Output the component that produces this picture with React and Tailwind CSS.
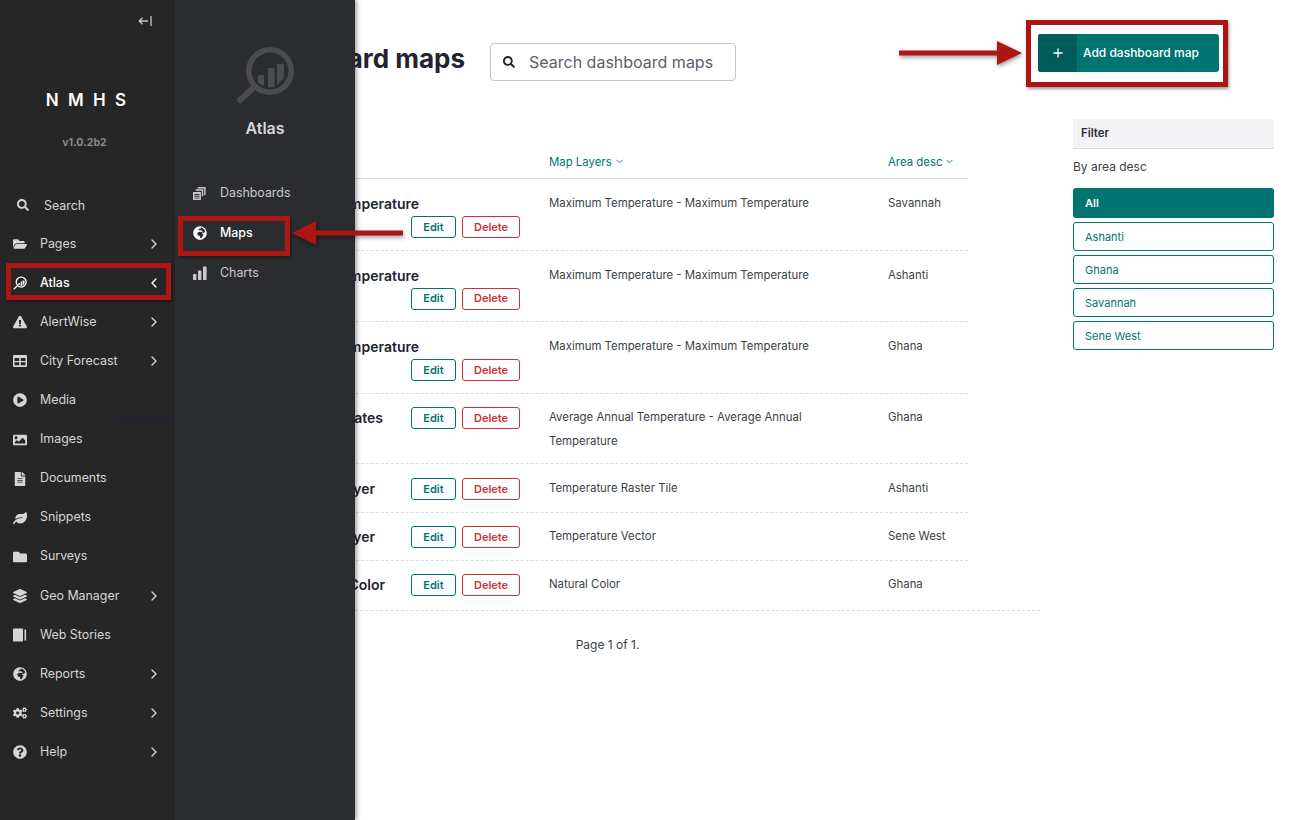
import React from 'react';
import { ChevronRight, ChevronLeft, ChevronDown, Plus } from 'lucide-react';
import {
    FaSearch, FaFolderOpen, FaExclamationTriangle, FaPlayCircle, FaImage, FaFileAlt,
    FaLeaf, FaFolder, FaLayerGroup, FaGlobeAfrica, FaCogs, FaQuestionCircle,
} from 'react-icons/fa';

const AtlasIcon = ({ className }) => (
    <svg viewBox="0 0 60 60" className={className} fill="currentColor">
        <path fillRule="evenodd" d="M35 2a24 24 0 1 1 0 48 24 24 0 0 1 0-48zm0 5.500a18.500 18.500 0 1 0 0 37 18.500 18.500 0 0 0 0-37z" />
        <path d="M17 44L5 55" stroke="currentColor" strokeWidth="6" strokeLinecap="round" />
        <path d="M23 30h6v11l-6-3zM33 23h6.500v19l-6.500.5zM42 19h7v14l-7 7z" />
    </svg>
);

const StoriesIcon = ({ className }) => (
    <svg viewBox="0 0 14 14" className={className} fill="currentColor">
        <rect x="0" y="0.500" width="10" height="13" rx="0.800" />
        <rect x="11.500" y="1.500" width="1.600" height="11" />
    </svg>
);

const DashboardsIcon = ({ className }) => (
    <svg viewBox="0 0 14 14" className={className} fill="currentColor">
        <path d="M5 0h8.500v9H12V1.500H5z" />
        <path d="M3 2.500h8V10H9.500V4H3z" />
        <path fillRule="evenodd" d="M0 5.500h8.500V14H0zM1.500 7.500V8.500h5.500V7.500zM1.500 9.500v1h5.500v-1zM1.500 11.500v1h5.500v-1z" />
    </svg>
);

const TableIcon = ({ className }) => (
    <svg viewBox="0 0 14 12" className={className} fill="currentColor">
        <path fillRule="evenodd" d="M1 0h12a1 1 0 0 1 1 1v10a1 1 0 0 1-1 1H1a1 1 0 0 1-1-1V1a1 1 0 0 1 1-1zM1.500 3v3h4.700V3zM7.800 3v3h4.700V3zM1.500 7.300v3h4.700v-3zM7.800 7.300v3h4.700v-3z" />
    </svg>
);

const BarsIcon = ({ className }) => (
    <svg viewBox="0 0 14 14" className={className} fill="currentColor">
        <rect x="0" y="8" width="3.400" height="6" rx="0.400" />
        <rect x="5" y="4.500" width="3.400" height="9.500" rx="0.400" />
        <rect x="10" y="0.500" width="3.600" height="13.500" rx="0.400" />
    </svg>
);

const CollapseIcon = ({ className }) => (
    <svg viewBox="0 0 14 12" className={className} fill="none" stroke="currentColor" strokeWidth="1.300">
        <path d="M10 6H1.200M4.500 2.700L1.200 6l3.300 3.300" />
        <path d="M13 1v10" />
    </svg>
);

const NAV_ITEMS = [
    { label: 'Pages', icon: FaFolderOpen, more: true },
    { label: 'Atlas', icon: AtlasIcon, open: true },
    { label: 'AlertWise', icon: FaExclamationTriangle, more: true },
    { label: 'City Forecast', icon: TableIcon, more: true },
    { label: 'Media', icon: FaPlayCircle },
    { label: 'Images', icon: FaImage },
    { label: 'Documents', icon: FaFileAlt },
    { label: 'Snippets', icon: FaLeaf },
    { label: 'Surveys', icon: FaFolder },
    { label: 'Geo Manager', icon: FaLayerGroup, more: true },
    { label: 'Web Stories', icon: StoriesIcon },
    { label: 'Reports', icon: FaGlobeAfrica, more: true },
    { label: 'Settings', icon: FaCogs, more: true },
    { label: 'Help', icon: FaQuestionCircle, more: true },
];

const ROWS = [
    { title: 'Maximum Temperature', layers: 'Maximum Temperature - Maximum Temperature', area: 'Savannah', stacked: true, rowClass: 'h-[71.500px]', end: 'pr-[101px]' },
    { title: 'Maximum Temperature', layers: 'Maximum Temperature - Maximum Temperature', area: 'Ashanti', stacked: true, rowClass: 'h-[71.500px]', end: 'pr-[101px]' },
    { title: 'Maximum Temperature', layers: 'Maximum Temperature - Maximum Temperature', area: 'Ghana', stacked: true, rowClass: 'h-[72px]', end: 'pr-[101px]' },
    { title: 'Average Annual Temperature Estimates', layers: 'Average Annual Temperature - Average Annual Temperature', area: 'Ghana', rowClass: 'h-[70px]', end: 'pr-[28px]', top: 'pt-[13px]', textTop: 'pt-[11px]' },
    { title: 'Temperature Raster Layer', layers: 'Temperature Raster Tile', area: 'Ashanti', rowClass: 'h-[49px]', end: 'pr-[36px]', top: 'pt-[14px]', textTop: 'pt-[12px]' },
    { title: 'Temperature Vector Layer', layers: 'Temperature Vector', area: 'Sene West', rowClass: 'h-[48px]', end: 'pr-[36px]', top: 'pt-[13px]', textTop: 'pt-[11px]' },
    { title: 'Natural Color', layers: 'Natural Color', area: 'Ghana', rowClass: 'h-[49px]', end: 'pr-[26px]', top: 'pt-[13px]', textTop: 'pt-[11px]', last: true },
];

const FILTERS = ['Ashanti', 'Ghana', 'Savannah', 'Sene West'];

const Sidebar = () => (
    <aside className="w-[175px] shrink-0 h-full bg-[#262626] text-[#d6d6d6] flex flex-col">
        <div className="h-[42px] flex items-center justify-end pr-[23px] text-[#c8c8c8]">
            <CollapseIcon className="w-[14px] h-[12px]" />
        </div>
        <div className="mt-[48px] text-center text-white font-semibold text-[17px] leading-5 tracking-[0.55em] pl-[6px]">NMHS</div>
        <div className="mt-[25px] text-center text-[#8a8a8a] font-bold text-[10.600px] leading-4 pr-[6px]">v1.0.2b2</div>
        <div className="mt-[36.500px] h-[37px] flex items-center pl-[17px] text-[12.400px]">
            <FaSearch className="w-[12px] h-[12px] mb-[2px] shrink-0" />
            <span className="ml-[15px]">Search</span>
        </div>
        <nav className="flex flex-col">
            {NAV_ITEMS.map(item => {
                const Icon = item.icon;
                return (
                    <div key={item.label} className={`h-[39.100px] flex items-center pl-[13px] pr-[13px] text-[12.400px] ${item.open ? 'text-white font-medium' : ''}`}>
                        <Icon className="w-[14px] h-[14px] shrink-0" />
                        <span className="ml-[13px] flex-1 whitespace-nowrap">{item.label}</span>
                        {item.more && <ChevronRight className="w-4 h-4" strokeWidth={2} />}
                        {item.open && <ChevronLeft className="w-4 h-4" strokeWidth={2} />}
                    </div>
                );
            })}
        </nav>
    </aside>
);

const SubMenu = () => (
    <div className="absolute left-[175px] top-0 bottom-0 w-[180px] bg-[#2b2c2f] text-[#c9c9c9] flex flex-col shadow-[2px_0_4px_rgba(0,0,0,0.35)]">
        <div className="pt-[45px] flex flex-col items-center">
            <AtlasIcon className="w-[60px] h-[60px] text-[#4b4c4f]" />
        </div>
        <div className="mt-[11px] text-center text-[16px] leading-6 font-semibold text-[#d8d8d8]">Atlas</div>
        <div className="mt-[33px] flex flex-col">
            <div className="h-[40px] flex items-center pl-[18px] text-[12.400px]">
                <DashboardsIcon className="w-[13px] h-[13px] shrink-0" />
                <span className="ml-[14px]">Dashboards</span>
            </div>
            <div className="h-[40px] flex items-center pl-[18px] text-[12.400px] text-white font-medium">
                <FaGlobeAfrica className="w-[14px] h-[14px] shrink-0" />
                <span className="ml-[13px]">Maps</span>
            </div>
            <div className="h-[40px] flex items-center pl-[18px] text-[12.400px]">
                <BarsIcon className="w-[14px] h-[14px] shrink-0" />
                <span className="ml-[13px]">Charts</span>
            </div>
        </div>
    </div>
);

const MapRow = ({ row }) => {
    const buttons = (
        <div className="flex gap-[6px] shrink-0">
            <button className="w-[45px] h-[22px] rounded-[3px] border border-[#007470] text-[#007470] text-[11px] font-semibold bg-white">Edit</button>
            <button className="w-[58px] h-[22px] rounded-[3px] border border-[#cd3238] text-[#cd3238] text-[11px] font-semibold bg-white">Delete</button>
        </div>
    );
    return (
        <div className={`grid grid-cols-[358px_339px_80px] ${row.rowClass} ${row.last ? '' : 'border-b border-dashed border-[#dcdcdc]'}`}>
            {row.stacked ? (
                <div className="pr-[29px] pt-[15px]">
                    <div className={`text-[14px] leading-[20px] font-semibold text-[#1f2430] text-right whitespace-nowrap ${row.end}`}>{row.title}</div>
                    <div className="flex justify-end mt-[2px]">{buttons}</div>
                </div>
            ) : (
                <div className={`pr-[29px] flex justify-end ${row.top}`}>
                    <div className={`text-[14px] leading-[22px] font-semibold text-[#1f2430] whitespace-nowrap ${row.end}`}>{row.title}</div>
                    {buttons}
                </div>
            )}
            <div className={`text-[11.400px] leading-[24px] text-[#3a3f47] ${row.stacked ? 'pt-[12px] pr-[8px]' : `${row.textTop} pr-[40px]`}`}>{row.layers}</div>
            <div className={`text-[11.400px] leading-[24px] text-[#3a3f47] ${row.stacked ? 'pt-[12px]' : row.textTop}`}>{row.area}</div>
        </div>
    );
};

const Main = () => (
    <main className="flex-1 min-w-0 h-full bg-white relative">
        <div className="h-[119px] flex items-start">
            <div className="mt-[43px] h-[38px] flex items-center w-[290px] justify-end">
                <h1 className="text-[26px] leading-[30px] font-bold text-[#1f2430] whitespace-nowrap mb-[6px]">Dashboard maps</h1>
            </div>
            <div className="ml-[25px] mt-[43px] w-[246px] h-[38px] rounded-[4px] border border-[#c4c4c4] flex items-center pl-[12px] text-[#5c5f66] text-[16px]">
                <FaSearch className="w-[12px] h-[12px] text-[#1f2430] shrink-0" />
                <span className="ml-[14px] whitespace-nowrap">Search dashboard maps</span>
            </div>
            <button className="ml-[302px] mt-[34px] w-[181px] h-[38px] rounded-[3px] bg-[#007470] text-white flex overflow-hidden text-[12px] font-medium">
                <span className="w-[39px] h-full bg-[#005c5a] flex items-center justify-center">
                    <Plus className="w-[14px] h-[14px]" strokeWidth={2.200} />
                </span>
                <span className="ml-[6px] self-center whitespace-nowrap">Add dashboard map</span>
            </button>
        </div>
        <div className="flex items-start">
            <div className="w-[865px] shrink-0">
                <div className="ml-[16px] w-[777px]">
                    <div className="grid grid-cols-[358px_339px_80px] h-[60px] border-b border-[#dcdcdc] items-end pb-[8px] text-[11.400px] text-[#007470] leading-[16px]">
                        <div />
                        <div className="flex items-center gap-[2px]">Map Layers <ChevronDown className="w-[11px] h-[11px] mb-[2px]" strokeWidth={1.800} /></div>
                        <div className="flex items-center gap-[2px]">Area desc <ChevronDown className="w-[11px] h-[11px] mb-[2px]" strokeWidth={1.800} /></div>
                    </div>
                    {ROWS.map((row, i) => <MapRow key={i} row={row} />)}
                </div>
                <div className="border-t border-dashed border-[#dcdcdc] pt-[25px] text-center text-[12px] leading-[18px] text-[#3a3f47]">Page 1 of 1.</div>
            </div>
            <div className="ml-[33px] w-[201px] shrink-0">
                <div className="h-[30px] bg-[#f3f3f5] border-b border-[#d9d9d9] flex items-center pl-[8px] text-[11.400px] font-semibold text-[#2a2e36]">Filter</div>
                <div className="mt-[9px] text-[12px] leading-[18px] text-[#3a3f47]">By area desc</div>
                <div className="mt-[12px] h-[30px] pt-[1px] rounded-[3px] bg-[#007470] text-white text-[11px] font-semibold flex items-center pl-[12px]">All</div>
                <div className="mt-[4px] flex flex-col gap-[4px]">
                    {FILTERS.map(f => (
                        <div key={f} className="h-[29px] pt-[1px] rounded-[3px] border border-[#007470] text-[#007470] text-[11px] flex items-center pl-[11px]">{f}</div>
                    ))}
                </div>
            </div>
        </div>
    </main>
);

// red callouts drawn over the screenshot
const Annotations = () => (
    <>
        <div className="absolute left-[6px] top-[263px] w-[165px] h-[37px] border-[5px] border-[#ad1612] shadow-[1px_2px_3px_rgba(0,0,0,0.4)] pointer-events-none" />
        <div className="absolute left-[178px] top-[216px] w-[112px] h-[40px] border-[5px] border-[#ad1612] shadow-[1px_2px_3px_rgba(0,0,0,0.4)] pointer-events-none" />
        <div className="absolute left-[1026px] top-[20px] w-[202px] h-[67px] border-[5px] border-[#ad1612] shadow-[1px_2px_3px_rgba(0,0,0,0.4)] pointer-events-none" />
        <svg className="absolute left-[290px] top-[218px] w-[116px] h-[30px] drop-shadow-[1px_2px_2px_rgba(0,0,0,0.4)] pointer-events-none" viewBox="0 0 116 30">
            <path d="M2 15L26 3v9.500h87v5H26V27z" fill="#ad1612" />
        </svg>
        <svg className="absolute left-[897px] top-[38px] w-[128px] h-[30px] drop-shadow-[1px_2px_2px_rgba(0,0,0,0.4)] pointer-events-none" viewBox="0 0 128 30">
            <path d="M2 12.500h98V3l25 12-25 12v-9.500H2z" fill="#ad1612" />
        </svg>
    </>
);

export default function App() {
    return (
        <div className="relative flex h-[820px] w-[1291px] overflow-hidden bg-white font-['Inter',sans-serif]">
            <Sidebar />
            <Main />
            <SubMenu />
            <Annotations />
        </div>
    );
}
